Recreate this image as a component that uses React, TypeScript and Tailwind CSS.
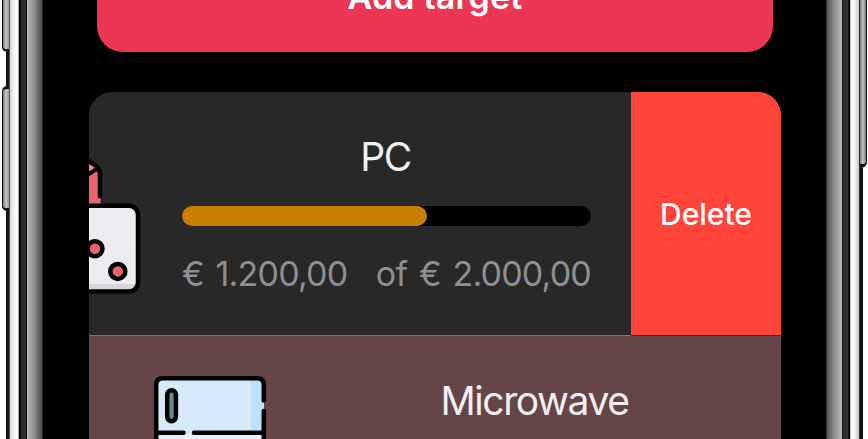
import type { ReactNode } from 'react';

const BUTTON_FACE = 'border-l border-[#111] bg-linear-to-r from-[#777] via-[#c8c8c8] to-[#999]';

function LeftEdge() {
  return (
    <div className="flex h-full w-[43px] shrink-0">
      <div className="flex w-[9px] flex-col">
        <div className={`ml-[2px] h-[52px] rounded-bl-[5px] border-b-[3px] ${BUTTON_FACE}`} />
        <div className="ml-[6px] h-[34px] bg-[#111313]" />
        <div className={`ml-[2px] h-[125px] rounded-l-[5px] border-y-[3px] ${BUTTON_FACE}`} />
        <div className="ml-[6px] flex-1 bg-[#111313]" />
      </div>
      <div className="w-px bg-[#555]" />
      <div className="w-[8px] bg-linear-to-r from-[#d8d8d8] via-[#f4f4f4] to-white" />
      <div className="w-px bg-[#aaa]" />
      <div className="w-[2px] bg-[#050607]" />
      <div className="w-[5px] bg-[#2c2d2e]" />
      <div className="w-px bg-[#111]" />
      <div className="w-[15px] bg-linear-to-r from-[#bababa] via-[#8e8e8e] to-[#484848]" />
      <div className="w-px bg-[#2b2b2b]" />
    </div>
  );
}

function RightEdge() {
  return (
    <div className="flex h-full w-[42px] shrink-0">
      <div className="w-px bg-[#303030]" />
      <div className="w-[15px] bg-linear-to-r from-[#555] via-[#8e8e8e] to-[#bdbdbd]" />
      <div className="w-px bg-[#151515]" />
      <div className="w-[5px] bg-[#2e2f30]" />
      <div className="w-[2px] bg-[#080808]" />
      <div className="w-px bg-[#bbb]" />
      <div className="w-[8px] bg-linear-to-r from-white via-[#f3f3f3] to-[#c4c4c4]" />
      <div className="w-px bg-[#333]" />
      <div className="flex w-[8px] flex-col">
        <div className="mr-px h-[168px] rounded-br-[6px] border-r border-b-[4px] border-[#111] bg-linear-to-r from-[#777] via-[#c8c8c8] to-[#777]" />
        <div className="mr-[5px] flex-1 bg-[#151717]" />
      </div>
    </div>
  );
}

function ComputerIcon() {
  return (
    <svg className="block h-[243px] w-[55px] shrink-0" viewBox="89 92 55 243" fill="none" stroke="#000" strokeLinecap="round" strokeLinejoin="round">
      <path d="M85 160 L95 165 Q100.500 167.500 100.500 174 V205 H85Z" fill="#e8636f" stroke="none" />
      <path d="M86 163 L98 169 L86 176Z" fill="#ff8088" stroke="none" />
      <path d="M84 158.500 L93 163.800 Q100 167.500 100 175 V196" strokeWidth="4.500" />
      <path d="M97.500 168.500 L85 176.500" strokeWidth="4" />
      <rect x="60" y="206" width="77.700" height="85.500" rx="9" fill="#edebef" stroke="none" />
      <path d="M60 284 H136 Q135 290.500 129 290.500 H60Z" fill="#d8d6da" stroke="none" />
      <rect x="60" y="205.700" width="78" height="85.800" rx="9" strokeWidth="4.500" />
      <circle cx="95" cy="248.700" r="7.500" fill="#e8636f" strokeWidth="4.500" />
      <circle cx="117.800" cy="271.400" r="7.500" fill="#e8636f" strokeWidth="4.500" />
    </svg>
  );
}

function ApplianceIcon() {
  return (
    <svg className="block h-[103px] w-[115px] shrink-0" viewBox="153 336 115 103" fill="none" stroke="#000" strokeLinecap="round">
      <path d="M156 445 V384 Q156 378 162 378 H258 Q264 378 264 384 V445Z" fill="#d9e9fc" stroke="none" />
      <path d="M251 379 H258 Q264 379 264 384 V433 H251Z" fill="#bde0ff" stroke="none" />
      <rect x="157" y="434" width="106" height="10" fill="#e7f0fe" stroke="none" />
      <path d="M156.200 445 V385 Q156.200 378.300 162.900 378.300 H257 Q263.800 378.300 263.800 385 V400.500 M263.800 411 V445" strokeWidth="4.500" />
      <path d="M157 432.700 H183.500 M194 432.700 H263" strokeWidth="4.500" />
      <rect x="167.200" y="390.200" width="8.700" height="31" rx="4.350" fill="#618a94" strokeWidth="4.500" />
    </svg>
  );
}

function Title({ children }: { children: ReactNode }) {
  return (
    <h2 className="whitespace-nowrap pr-[2px] text-center text-[39px] leading-[48px] font-normal tracking-[-0.036em] text-[#f0f0f0]">
      {children}
    </h2>
  );
}

export default function App() {
  return (
    <div className="flex h-[439px] w-[868px] overflow-hidden bg-white font-['Inter','Liberation_Sans',sans-serif]">
      <LeftEdge />
      <main className="flex min-w-0 flex-1 flex-col bg-black">
        <button className="ml-[54px] flex h-[52px] w-[676px] shrink-0 items-end justify-center rounded-b-[26px] bg-[#ec3654] pb-[33px] text-white">
          <span className="whitespace-nowrap text-[34px] leading-[44px] font-semibold tracking-[0.006em]">Add target</span>
        </button>
        <section className="mt-[40px] ml-[46px] w-[692px] overflow-hidden rounded-t-[23px]">
          <div className="flex h-[243px] bg-[#282828]">
            <ComputerIcon />
            <div className="ml-[38px] w-[409px] pt-[41px]">
              <Title>PC</Title>
              <div className="mt-[25px] h-[20px] rounded-full bg-black">
                <div className="h-full w-[245px] rounded-full bg-[#c77e00]" />
              </div>
              <div className="mt-[27px] flex justify-between whitespace-nowrap text-[34px] leading-[42px] font-normal tracking-[-0.024em] [word-spacing:3px] text-[#8e8e93]">
                <span>€ 1.200,00</span>
                <span>of € 2.000,00</span>
              </div>
            </div>
            <button className="ml-auto w-[150px] bg-[#ff453a] text-[30px] leading-[40px] font-medium text-white">Delete</button>
          </div>
          <div className="flex h-px">
            <div className="w-[542px] bg-[#777273]" />
            <div className="flex-1 bg-[#51262a]" />
          </div>
          <div className="flex h-[103px] bg-[#664549]">
            <div className="w-[64px] shrink-0" />
            <ApplianceIcon />
            <div className="ml-[63px] w-[409px] pt-[41px]">
              <Title>Microwave</Title>
            </div>
          </div>
        </section>
      </main>
      <RightEdge />
    </div>
  );
}
